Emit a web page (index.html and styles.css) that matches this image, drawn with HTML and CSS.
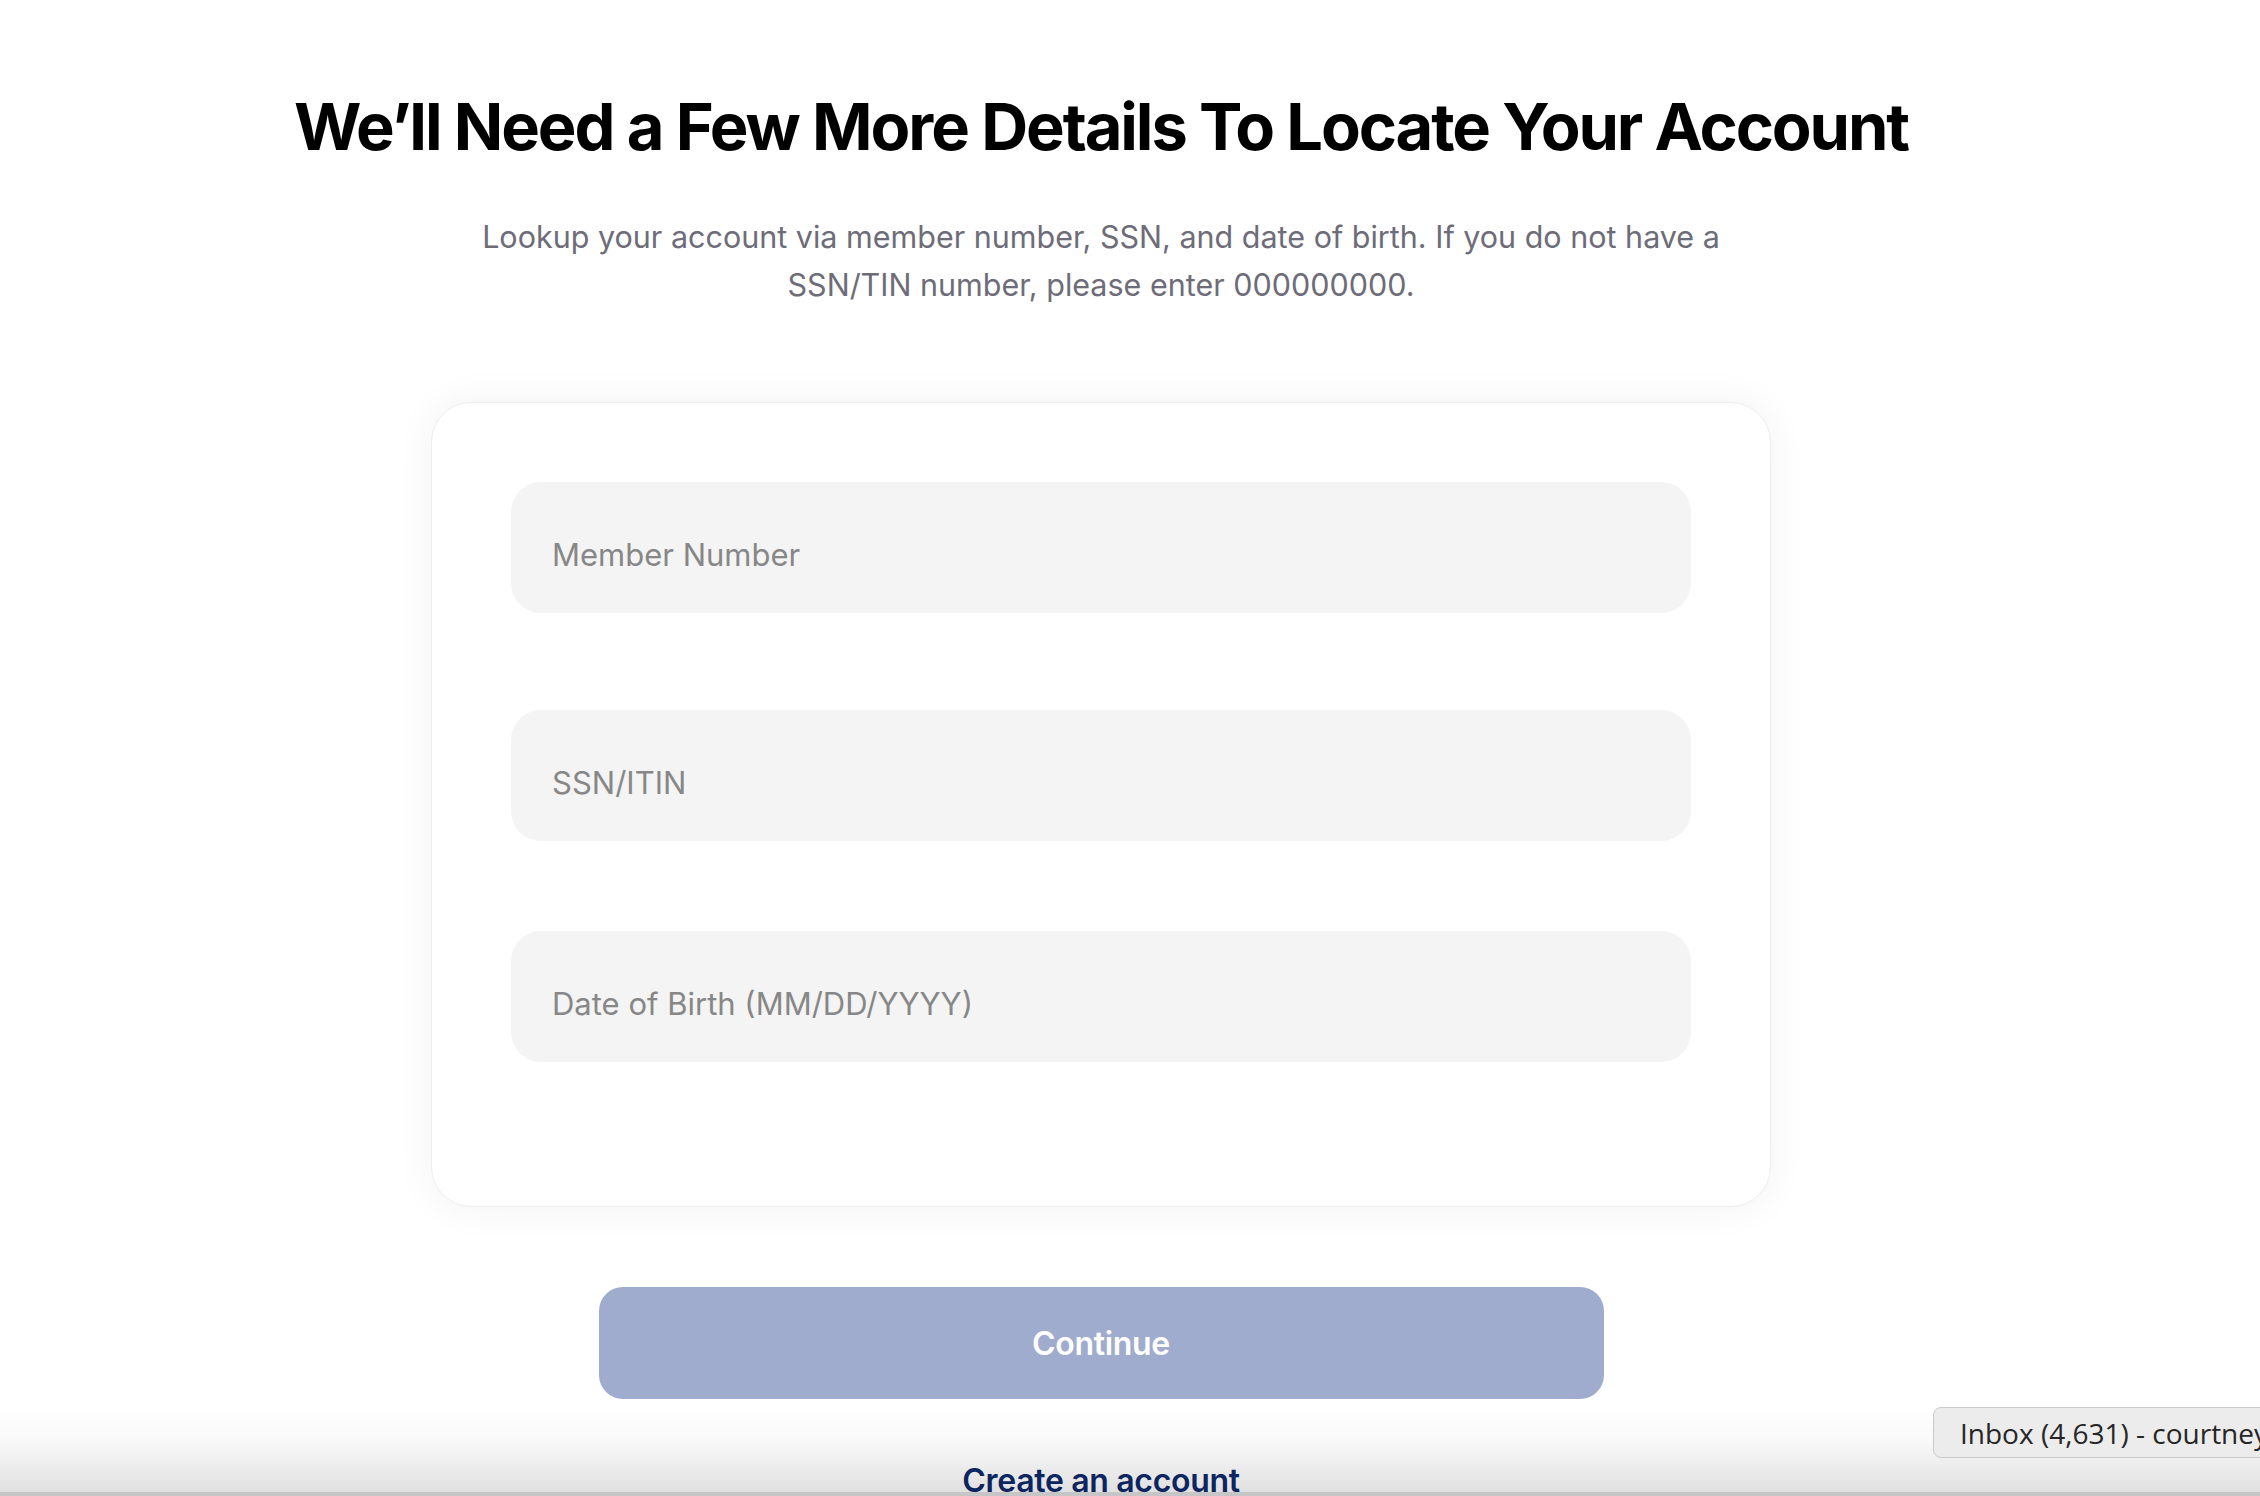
FILE: index.html
```html
<!DOCTYPE html>
<html lang="en">
<head>
<meta charset="utf-8">
<title>Locate Your Account</title>
<link rel="stylesheet" href="styles.css">
</head>
<body>
<main class="page">
  <h1 class="title">We’ll Need a Few More Details To Locate Your Account</h1>
  <p class="subtitle">Lookup your account via member number, SSN, and date of birth. If you do not have a<br>SSN/TIN number, please enter 000000000.</p>
  <div class="card-clip">
    <form class="card">
      <div class="field field-1"><input class="input" type="text" placeholder="Member Number"></div>
      <div class="field field-2"><input class="input" type="text" placeholder="SSN/ITIN"></div>
      <div class="field"><input class="input" type="text" placeholder="Date of Birth (MM/DD/YYYY)"></div>
    </form>
  </div>
  <button class="continue" type="button">Continue</button>
  <a class="create" href="#">Create an account</a>
</main>
<div class="dock-shade"></div>
<div class="tab-tip">Inbox (4,631) - courtney@example.com</div>
</body>
</html>
```
FILE: styles.css
```css
html, body {
  margin: 0;
  padding: 0;
  background: #ffffff;
  overflow: hidden;
  height: 100%;
}

body {
  font-family: Inter, "Noto Sans", Arial, sans-serif;
}

.page {
  display: flex;
  flex-direction: column;
  align-items: center;
  padding-right: 58px;
}

.title {
  margin: 87px 0 0;
  font-size: 65px;
  line-height: 80px;
  font-weight: 700;
  letter-spacing: -0.032em;
  color: #000000;
  text-align: center;
  white-space: nowrap;
}

.subtitle {
  margin: 46px 0 0;
  font-size: 30.5px;
  line-height: 48px;
  color: #6d6c78;
  text-align: center;
  letter-spacing: 0;
  white-space: nowrap;
}

.card-clip {
  margin-top: 53px;
  padding: 40px 80px 39px;
  overflow: hidden;
}

.card {
  box-sizing: content-box;
  padding: 79px 79px 144px;
  width: 1180px;
  background: #ffffff;
  border: 1px solid #ededed;
  border-radius: 40px;
  box-shadow: 0 0 40px rgba(0, 0, 0, 0.055);
  display: flex;
  flex-direction: column;
}

.field-1 { margin-bottom: 97px; }
.field-2 { margin-bottom: 90px; }

.input {
  display: block;
  width: 100%;
  height: 131px;
  box-sizing: border-box;
  border: none;
  outline: none;
  border-radius: 30px;
  background: #f4f4f4;
  padding: 14px 41px 0;
  font-family: Inter, "Noto Sans", Arial, sans-serif;
  font-size: 31px;
  color: #333;
}

.input::placeholder {
  color: #878787;
  opacity: 1;
}

.continue {
  margin-top: 41px;
  width: 1005px;
  height: 112px;
  border: none;
  border-radius: 24px;
  background: #a0acce;
  color: #ffffff;
  font-family: Inter, "Noto Sans", Arial, sans-serif;
  font-size: 32px;
  font-weight: 600;
  letter-spacing: -0.01em;
}

.create {
  margin-top: 62px;
  font-size: 32px;
  line-height: 40px;
  font-weight: 600;
  color: #0e2a6b;
  text-decoration: none;
  letter-spacing: -0.01em;
}

.dock-shade {
  position: fixed;
  left: 0;
  right: 0;
  bottom: 0;
  height: 89px;
  background: linear-gradient(to bottom, rgba(0, 0, 0, 0) 0%, rgba(0, 0, 0, 0.02) 40%, rgba(0, 0, 0, 0.12) 100%);
  border-bottom: 4px solid #c6c6c6;
  pointer-events: none;
}

.tab-tip {
  position: fixed;
  left: 1933px;
  top: 1407px;
  height: 51px;
  box-sizing: border-box;
  padding: 0 26px;
  display: flex;
  align-items: center;
  white-space: nowrap;
  background: #ececec;
  border: 1px solid #cacaca;
  border-radius: 8px;
  font-family: "Open Sans", "Noto Sans", Arial, sans-serif;
  font-size: 28px;
  color: #262626;
}
```
